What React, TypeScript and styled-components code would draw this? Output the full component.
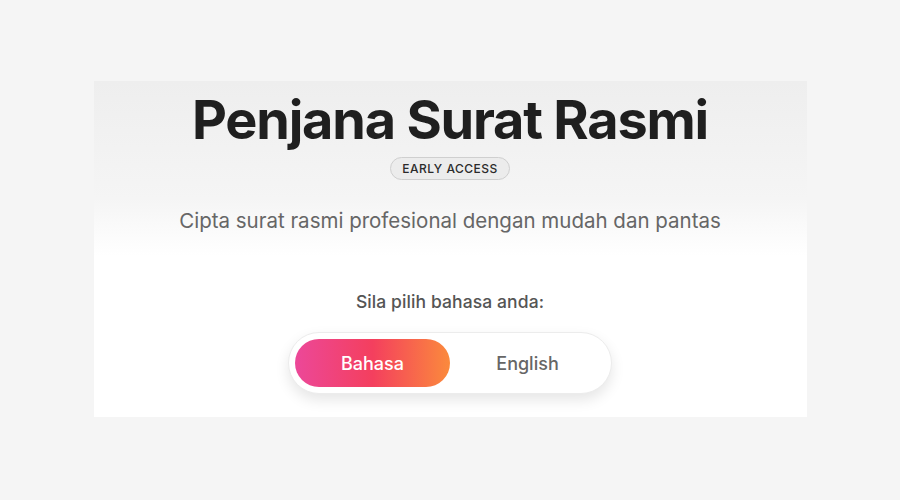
import React, { useState } from "react";
import styled, { createGlobalStyle } from "styled-components";

const GlobalStyle = createGlobalStyle`
  html, body {
    margin: 0;
    padding: 0;
    background: #f5f5f5;
    font-family: Inter, "Noto Sans", sans-serif;
  }
`;

type Lang = "ms" | "en";

export default function App() {
  const [lang, setLang] = useState<Lang>("ms");

  return (
    <>
      <GlobalStyle />
      <ScPage>
        <ScCard>
          <ScTitle>Penjana Surat Rasmi</ScTitle>
          <ScBadge>EARLY ACCESS</ScBadge>
          <ScSubtitle>Cipta surat rasmi profesional dengan mudah dan pantas</ScSubtitle>
          <ScPrompt>Sila pilih bahasa anda:</ScPrompt>
          <ScToggle>
            <ScOption $active={lang === "ms"} onClick={() => setLang("ms")}>
              Bahasa
            </ScOption>
            <ScOption $active={lang === "en"} onClick={() => setLang("en")}>
              English
            </ScOption>
          </ScToggle>
        </ScCard>
      </ScPage>
    </>
  );
}

const ScPage = styled.div`
  width: 900px;
  height: 500px;
  padding-top: 81px;
  box-sizing: border-box;
  display: flex;
  justify-content: center;
`;

const ScCard = styled.div`
  width: 713px;
  height: 336px;
  box-sizing: border-box;
  background: linear-gradient(to bottom, #eeeeee 0%, #f5f5f5 35%, #ffffff 52%, #ffffff 100%);
  display: flex;
  flex-direction: column;
  align-items: center;
  padding-top: 6px;
`;

const ScTitle = styled.h1`
  margin: 0;
  font-size: 54px;
  font-weight: 700;
  letter-spacing: -1.2px;
  line-height: 66px;
  color: #1f1f1f;
`;

const ScBadge = styled.div`
  margin-top: 4px;
  height: 23px;
  box-sizing: border-box;
  padding: 0 11px;
  border-radius: 12px;
  border: 1px solid #cfcfcf;
  background: #ececec;
  color: #2a2a2a;
  font-size: 12px;
  font-weight: 500;
  letter-spacing: 0.5px;
  display: flex;
  align-items: center;
`;

const ScSubtitle = styled.p`
  margin: 27px 0 0;
  font-size: 20.5px;
  line-height: 28px;
  color: #666;
`;

const ScPrompt = styled.p`
  margin: 55px 0 0;
  font-size: 17.5px;
  font-weight: 500;
  letter-spacing: 0.1px;
  line-height: 24px;
  color: #555;
`;

const ScToggle = styled.div`
  margin-top: 18px;
  display: flex;
  padding: 6px;
  background: #fff;
  border: 1px solid #ececec;
  border-radius: 31px;
  box-shadow: 0 6px 14px rgba(0, 0, 0, 0.1);
`;

const ScOption = styled.button<{ $active: boolean }>`
  width: 155px;
  height: 48px;
  border: none;
  border-radius: 24px;
  font-family: inherit;
  font-size: 18px;
  font-weight: 500;
  cursor: pointer;
  color: ${(p) => (p.$active ? "#fff" : "#666")};
  background: ${(p) =>
    p.$active ? "linear-gradient(to right, #ec4899, #f43f5e 50%, #fb8a3c)" : "transparent"};
`;
